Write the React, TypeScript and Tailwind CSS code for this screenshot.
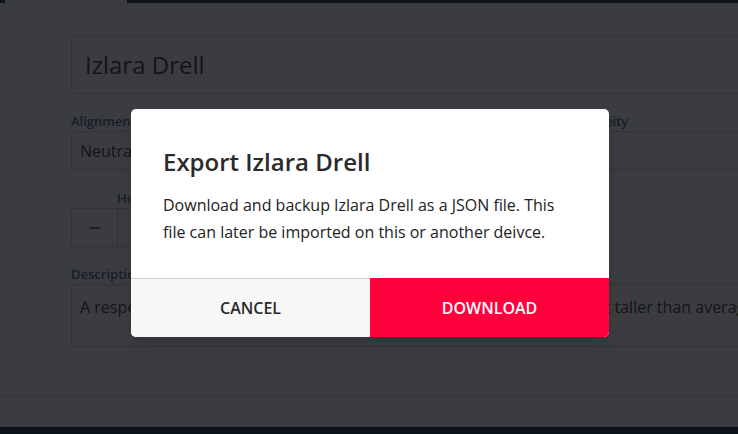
import { Minus } from "lucide-react";

const columns = [
  { label: "Alignment", value: "Neutral Good" },
  { label: "Background", value: "Noble" },
  { label: "Religion & Deity", value: "" },
  { label: "Gender", value: "" },
];

export default function App() {
  return (
    <div className="relative h-[434px] w-[738px] overflow-hidden bg-[#ecf0ff] font-['Open_Sans',sans-serif]">
      <div className="flex h-[3px] bg-[#344c68]">
        <div className="ml-[5px] w-[122px] bg-[#ecf0ff]" />
      </div>

      <div className="h-[393px] border-b border-[#d4d8e8] px-[71px] pt-[32px] shadow-sm">
        <div className="flex h-[59px] w-[700px] items-center rounded border border-[#c4c8d8] pl-[13px] text-[24px] text-[#50545f]">
          Izlara Drell
        </div>

        <div className="mt-[18px] grid w-[900px] grid-cols-4 gap-x-[16px]">
          {columns.map((column, index) => (
            <div key={index}>
              <p className="h-[18px] text-[13px] leading-[18px] font-semibold text-[#5878a8]">
                {column.label}
              </p>
              <div className="mt-[1px] flex h-[39px] items-center rounded border border-[#c4c8d8] px-[8px] text-[16px] text-[#50545f]">
                {column.value}
              </div>
            </div>
          ))}
        </div>

        <div className="mt-[19px] w-[203px]">
          <p className="h-[18px] pl-[46px] text-[13px] leading-[18px] font-semibold text-[#5878a8]">
            Height
          </p>
          <div className="mt-[1px] flex h-[39px] rounded border border-[#c4c8d8]">
            <div className="flex w-[46px] items-center justify-center border-r border-[#c4c8d8] text-[#50545f]">
              <Minus size={16} strokeWidth={2.5} />
            </div>
          </div>
        </div>

        <p className="mt-[18px] h-[18px] text-[13px] leading-[18px] font-semibold text-[#5878a8]">
          Description
        </p>
        <div className="mt-[1px] h-[63px] w-[700px] rounded border border-[#c4c8d8] px-[8px] pt-[10px] text-[16px] whitespace-nowrap text-[#50545f]">
          A respected envoy of the Silver Court, quiet and watchful, and a wee bit taller than average
        </div>
      </div>

      <div className="absolute bottom-0 left-0 h-[7px] w-full bg-[#2c4864]" />

      <div className="absolute inset-0 bg-black/75" />

      <div className="absolute top-[109px] left-[131px] w-[478px] overflow-hidden rounded-[5px] bg-white shadow-lg">
        <div className="px-[32px] pt-[37px] pb-[32px]">
          <h2 className="text-[24px] leading-[32px] font-semibold text-[#2b2b2b]">
            Export Izlara Drell
          </h2>
          <p className="mt-[14px] text-[16px] leading-[27px] text-[#222]">
            Download and backup Izlara Drell as a JSON file. This file can later be imported on this or another deivce.
          </p>
        </div>
        <div className="flex h-[59px]">
          <button className="flex-1 border-t border-[#cfcfcf] bg-[#f7f7f7] text-[16px] font-semibold text-[#2a2a2a] uppercase">
            Cancel
          </button>
          <button className="flex-1 bg-[#ff003c] text-[16px] font-semibold text-white uppercase">
            Download
          </button>
        </div>
      </div>
    </div>
  );
}
